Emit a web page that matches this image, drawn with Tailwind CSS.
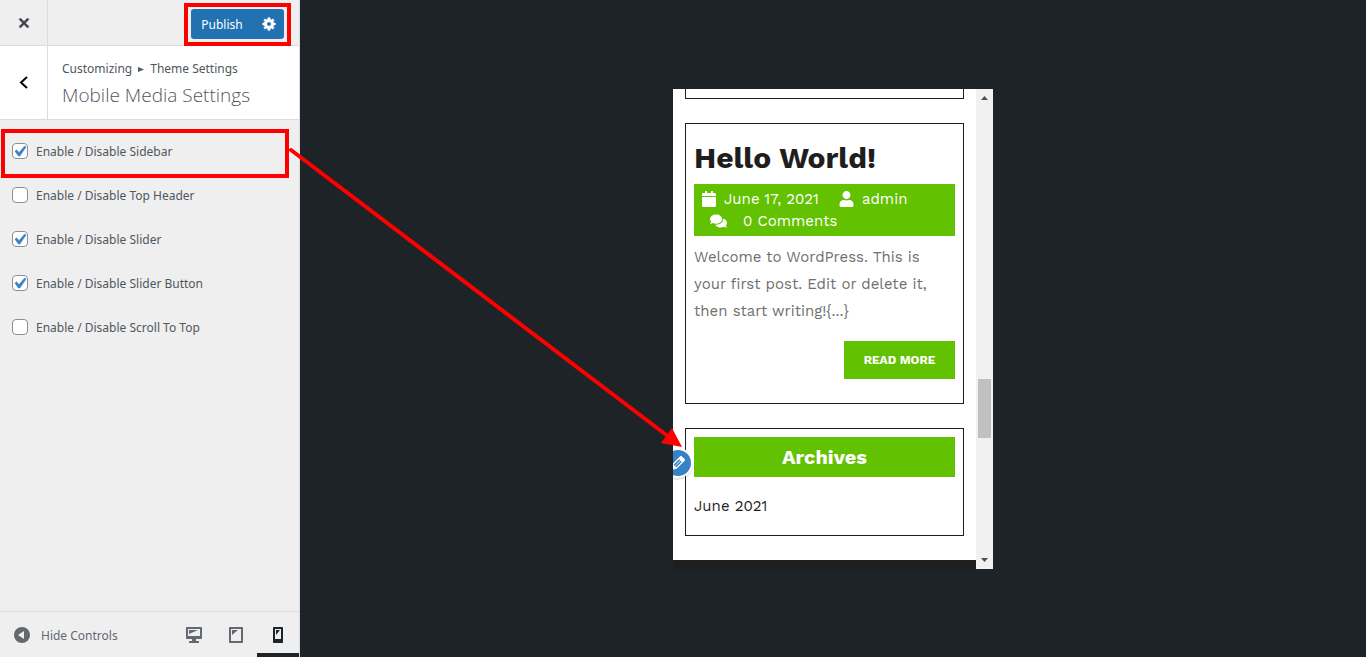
<!DOCTYPE html>
<html lang="en">
<head>
    <meta charset="UTF-8">
    <meta name="viewport" content="width=device-width, initial-scale=1.0">
    <title>Customize: Mobile Media Settings</title>
    <script src="https://cdn.jsdelivr.net/npm/@tailwindcss/browser@4"></script>
</head>
<body class="relative flex h-screen overflow-hidden bg-[#1d2327] font-['Noto_Sans',sans-serif] text-xs text-[#50575e]">

    <!-- Customizer controls -->
    <aside class="flex w-[300px] shrink-0 flex-col border-r border-[#dcdcde] bg-[#efefef]">
        <header class="flex h-[46px] shrink-0 items-center border-b border-[#dcdcde]">
            <button type="button" aria-label="Close" class="flex h-full w-12 items-center justify-center border-r border-[#dcdcde] text-[#3c434a]">
                <svg class="size-5" viewBox="0 0 20 20" fill="currentColor"><path d="M14.95 6.46L11.41 10l3.54 3.54-1.41 1.41L10 11.42l-3.53 3.53-1.42-1.42L8.58 10 5.05 6.47l1.42-1.42L10 8.58l3.54-3.53z" stroke="currentColor" stroke-width=".5"/></svg>
            </button>
            <div class="ml-auto mr-[15px] mt-[3px] flex h-[30px] overflow-hidden rounded-[3px] bg-[#2271b1] text-white">
                <button type="button" class="w-[62px] pt-px">Publish</button>
                <button type="button" aria-label="Publish Settings" class="flex w-[31px] items-center justify-center">
                    <svg class="size-[14px]" viewBox="0 1 19 19" fill="currentColor"><path d="M18 12h-2.18c-.17.7-.44 1.35-.81 1.93l1.54 1.54-2.1 2.1-1.54-1.54c-.58.36-1.23.63-1.91.79V19H8v-2.18c-.68-.16-1.33-.43-1.91-.79l-1.54 1.54-2.12-2.12 1.54-1.54c-.36-.58-.63-1.23-.79-1.91H1V9.03h2.17c.16-.7.44-1.35.8-1.94L2.43 5.55l2.1-2.1 1.54 1.54c.58-.37 1.24-.64 1.93-.81V2h3v2.18c.68.16 1.33.43 1.91.79l1.54-1.54 2.12 2.12-1.54 1.54c.36.59.64 1.24.8 1.94H18V12zm-8.500 1.500c1.660 0 3-1.340 3-3s-1.340-3-3-3-3 1.340-3 3 1.340 3 3 3z" stroke="currentColor" stroke-width=".8"/></svg>
                </button>
            </div>
        </header>

        <div class="flex h-[74px] shrink-0 border-b border-[#dcdcde] bg-white">
            <button type="button" aria-label="Back" class="flex w-12 items-center justify-center border-r border-[#dcdcde] text-black">
                <svg class="size-5" viewBox="0 0 20 20" fill="none" stroke="currentColor" stroke-width="2"><path d="M13 4L7 9.500 13 15"/></svg>
            </button>
            <div class="px-[14px] pt-3">
                <div class="flex items-center gap-[6px] leading-[22px]">
                    <span>Customizing</span>
                    <svg class="h-[5px] w-[6px]" viewBox="0 0 6 5" fill="currentColor"><path d="M0 0l6 2.500L0 5z"/></svg>
                    <span>Theme Settings</span>
                </div>
                <h1 class="font-['Open_Sans',sans-serif] text-[19px] font-light leading-[30px]">Mobile Media Settings</h1>
            </div>
        </div>

        <ul class="flex-1 px-3 pt-[9px]">
            <li class="flex h-11 items-center">
                <label class="flex items-center gap-2">
                    <span class="relative flex">
                        <input type="checkbox" checked class="peer size-4 appearance-none rounded-[4px] border border-[#8c8f94] bg-white">
                        <svg class="absolute inset-0 hidden size-4 text-[#3582c4] peer-checked:block" viewBox="3 2 15 15" fill="currentColor"><path d="M14.83 4.89l1.34.94-5.81 8.38H9.02L5.78 9.67l1.34-1.25 2.57 2.4z" stroke="currentColor" stroke-width=".5"/></svg>
                    </span>
                    <span class="pt-px">Enable / Disable Sidebar</span>
                </label>
            </li>
            <li class="flex h-11 items-center">
                <label class="flex items-center gap-2">
                    <input type="checkbox" class="size-4 appearance-none rounded-[4px] border border-[#8c8f94] bg-white">
                    <span class="pt-px">Enable / Disable Top Header</span>
                </label>
            </li>
            <li class="flex h-11 items-center">
                <label class="flex items-center gap-2">
                    <span class="relative flex">
                        <input type="checkbox" checked class="peer size-4 appearance-none rounded-[4px] border border-[#8c8f94] bg-white">
                        <svg class="absolute inset-0 hidden size-4 text-[#3582c4] peer-checked:block" viewBox="3 2 15 15" fill="currentColor"><path d="M14.83 4.89l1.34.94-5.81 8.38H9.02L5.78 9.67l1.34-1.25 2.57 2.4z" stroke="currentColor" stroke-width=".5"/></svg>
                    </span>
                    <span class="pt-px">Enable / Disable Slider</span>
                </label>
            </li>
            <li class="flex h-11 items-center">
                <label class="flex items-center gap-2">
                    <span class="relative flex">
                        <input type="checkbox" checked class="peer size-4 appearance-none rounded-[4px] border border-[#8c8f94] bg-white">
                        <svg class="absolute inset-0 hidden size-4 text-[#3582c4] peer-checked:block" viewBox="3 2 15 15" fill="currentColor"><path d="M14.83 4.89l1.34.94-5.81 8.38H9.02L5.78 9.67l1.34-1.25 2.57 2.4z" stroke="currentColor" stroke-width=".5"/></svg>
                    </span>
                    <span class="pt-px">Enable / Disable Slider Button</span>
                </label>
            </li>
            <li class="flex h-11 items-center">
                <label class="flex items-center gap-2">
                    <input type="checkbox" class="size-4 appearance-none rounded-[4px] border border-[#8c8f94] bg-white">
                    <span class="pt-px">Enable / Disable Scroll To Top</span>
                </label>
            </li>
        </ul>

        <footer class="flex h-[46px] shrink-0 border-t border-[#dcdcde] text-[#646970]">
            <button type="button" class="flex items-center gap-[9px] pl-3 pt-px">
                <svg class="size-5" viewBox="0 0 20 20"><circle cx="10" cy="10" r="8" fill="currentColor"/><path d="M12 6v8l-6-4z" fill="#efefef"/></svg>
                <span class="pt-px">Hide Controls</span>
            </button>
            <div class="ml-auto flex">
                <button type="button" aria-label="Desktop preview" class="flex w-[42px] items-center justify-center border-b-4 border-transparent pt-1">
                    <svg class="size-5" viewBox="0 0 20 20" fill="currentColor"><path d="M3 2h14c.55 0 1 .45 1 1v10c0 .55-.45 1-1 1h-5v2h2c.55 0 1 .45 1 1v1H5v-1c0-.55.45-1 1-1h2v-2H3c-.55 0-1-.45-1-1V3c0-.55.45-1 1-1zm13 9V4H4v7h12zM5 5h9L5 9V5z"/></svg>
                </button>
                <button type="button" aria-label="Tablet preview" class="flex w-[42px] items-center justify-center border-b-4 border-transparent pt-1">
                    <svg class="size-5" viewBox="0 0 20 20" fill="currentColor"><path d="M4 2h12c.55 0 1 .45 1 1v14c0 .55-.45 1-1 1H4c-.55 0-1-.45-1-1V3c0-.55.45-1 1-1zm11 14V4H5v12h10zM6 5h6l-6 5V5z"/></svg>
                </button>
                <button type="button" aria-label="Mobile preview" class="flex w-[42px] items-center justify-center border-b-4 border-[#1d2327] pt-1 text-[#1d2327]">
                    <svg class="size-5" viewBox="0 0 20 20" fill="currentColor"><path d="M6 2h8c.55 0 1 .45 1 1v14c0 .55-.45 1-1 1H6c-.55 0-1-.45-1-1V3c0-.55.45-1 1-1zm7 12V4H7v10h6zM8 5h4l-4 5V5z"/></svg>
                </button>
            </div>
        </footer>
    </aside>

    <!-- Phone preview -->
    <main class="flex flex-1 items-center justify-center">
        <div class="flex h-[480px] w-[320px] overflow-hidden bg-white font-['Work_Sans','Open_Sans',sans-serif] text-[15px]">
            <div class="flex flex-1 flex-col">
                <div class="flex flex-col gap-6 px-3 pb-6">
                    <div class="h-[10px] border border-t-0 border-[#1e1e1e]"></div>

                    <article class="border border-[#1e1e1e] p-2">
                        <h2 class="py-2 text-[30px] font-bold leading-9 text-[#1e1e1e]">Hello World!</h2>
                        <div class="bg-[#62c100] px-2 py-1 leading-[22px] text-white">
                            <div class="flex items-center">
                                <svg class="h-4 w-[14px]" viewBox="0 0 448 512" fill="currentColor"><path d="M12 192h424c6.6 0 12 5.4 12 12v260c0 26.5-21.5 48-48 48H48c-26.5 0-48-21.5-48-48V204c0-6.6 5.4-12 12-12zm436-44v-36c0-26.5-21.5-48-48-48h-48V12c0-6.6-5.4-12-12-12h-40c-6.6 0-12 5.4-12 12v52H160V12c0-6.6-5.4-12-12-12h-40c-6.6 0-12 5.4-12 12v52H48C21.5 64 0 85.5 0 112v36c0 6.6 5.4 12 12 12h424c6.6 0 12-5.4 12-12z"/></svg>
                                <a href="#" class="ml-2">June 17, 2021</a>
                                <svg class="ml-5 h-4 w-[15px]" viewBox="0 0 448 512" fill="currentColor"><path d="M224 256c70.7 0 128-57.3 128-128S294.7 0 224 0 96 57.3 96 128s57.3 128 128 128zm89.6 32h-16.7c-22.2 10.2-46.9 16-72.9 16s-50.6-5.8-72.9-16h-16.7C60.2 288 0 348.2 0 422.4V464c0 26.5 21.5 48 48 48h352c26.5 0 48-21.5 48-48v-41.6c0-74.2-60.2-134.4-134.4-134.4z"/></svg>
                                <a href="#" class="ml-2">admin</a>
                            </div>
                            <div class="flex items-center pl-2">
                                <svg class="h-4 w-[17px]" viewBox="0 0 576 512" fill="currentColor"><path d="M416 192c0-88.4-93.1-160-208-160S0 103.6 0 192c0 34.3 14.1 65.9 38 92-13.4 30.2-35.5 54.2-35.8 54.5-2.2 2.3-2.8 5.7-1.5 8.7S4.8 352 8 352c36.6 0 66.9-12.3 88.7-25 32.2 15.7 70.3 25 111.3 25 114.9 0 208-71.6 208-160zm122 220c23.9-26 38-57.7 38-92 0-66.9-53.5-124.2-129.3-148.1.9 6.6 1.3 13.3 1.3 20.1 0 105.9-107.7 192-240 192-10.8 0-21.3-.8-31.7-1.9C207.8 439.6 281.8 480 368 480c41 0 79.1-9.2 111.3-25 21.8 12.7 52.1 25 88.7 25 3.2 0 6.1-1.9 7.3-4.8 1.3-2.9.7-6.3-1.5-8.7-.3-.3-22.4-24.2-35.8-54.5z"/></svg>
                                <span class="ml-4">0 Comments</span>
                            </div>
                        </div>
                        <p class="mt-2 leading-[27px] text-[#707070]">Welcome to WordPress. This is<br>your first post. Edit or delete it,<br>then start writing!{...}</p>
                        <div class="my-4 flex justify-end">
                            <a href="#" class="flex h-[38px] w-[111px] items-center justify-center bg-[#62c100] text-xs font-bold text-white">READ MORE</a>
                        </div>
                    </article>

                    <section class="relative border border-[#1e1e1e] p-2">
                        <button type="button" aria-label="Edit widget" class="absolute -left-[23px] top-[19px] flex size-[30px] items-center justify-center rounded-full border-2 border-white bg-[#3582c4] text-white shadow-[0_2px_1px_rgba(60,67,74,0.15)]">
                            <svg class="size-5 shrink-0" viewBox="0 0 20 20" fill="currentColor"><path d="M13.89 3.39l2.71 2.72c.46.46.42 1.24.03 1.64l-8.01 8.02-5.56 1.16 1.16-5.58s7.6-7.63 7.99-8.03c.39-.39 1.22-.39 1.68.07zm-2.73 2.79l-5.59 5.61 1.11 1.11 5.54-5.65zm-2.97 8.23l5.58-5.6-1.07-1.08-5.59 5.6z"/></svg>
                        </button>
                        <h3 class="bg-[#62c100] text-center text-xl font-bold leading-10 text-white">Archives</h3>
                        <ul class="mb-2 mt-4 leading-[26px] text-[#1e1e1e]">
                            <li><a href="#">June 2021</a></li>
                        </ul>
                    </section>
                </div>
                <div class="flex-1 bg-[#1e1e1e]"></div>
            </div>

            <!-- Scrollbar -->
            <div class="flex w-[17px] flex-col items-center bg-[#f1f1f1] text-[#505050]">
                <svg class="size-[17px]" viewBox="0 0 17 17" fill="currentColor"><path d="M5 11h7L8.500 7z"/></svg>
                <div class="mt-[273px] h-[59px] w-[13px] bg-[#c1c1c1]"></div>
                <svg class="mt-auto size-[17px]" viewBox="0 0 17 17" fill="currentColor"><path d="M5 6h7l-3.500 4z"/></svg>
            </div>
        </div>
    </main>

    <!-- Callouts -->
    <div class="pointer-events-none absolute left-[184px] top-[3px] h-[43px] w-[107px] border-4 border-[#ff0000]"></div>
    <div class="pointer-events-none absolute left-[1px] top-[129px] h-[49px] w-[288px] border-4 border-[#ff0000]"></div>
    <svg class="pointer-events-none absolute left-[288px] top-[146px] h-[304px] w-[396px]" viewBox="288 146 396 304">
        <path d="M291 150L669 437" stroke="#ff0000" stroke-width="4" stroke-linecap="round"/>
        <path d="M682 447L661 443L672 428Z" fill="#ff0000"/>
    </svg>
</body>
</html>
